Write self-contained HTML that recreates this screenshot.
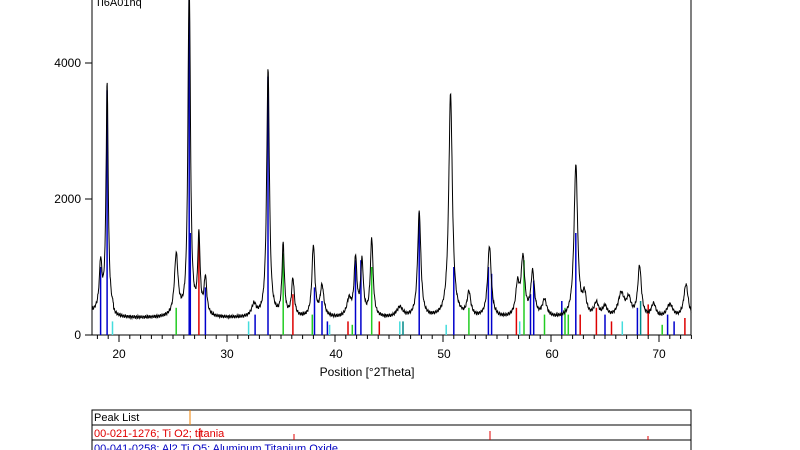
<!DOCTYPE html>
<html><head><meta charset="utf-8"><style>
html,body{margin:0;padding:0;background:#fff;width:800px;height:450px;overflow:hidden}
svg{display:block;font-family:"Liberation Sans",Arial,sans-serif}
</style></head><body>
<svg id="s" width="800" height="450" viewBox="0 0 800 450" xmlns="http://www.w3.org/2000/svg">
<rect x="92" y="-2" width="599" height="337" fill="none" stroke="#000" stroke-width="1"/>
<text x="95" y="6" font-size="11" fill="#000">Ti6A01hq</text>
<g font-size="12" fill="#000" text-anchor="end">
<text x="81" y="67">4000</text><text x="81" y="203">2000</text><text x="81" y="339">0</text>
</g>
<g stroke="#000"><line x1="85" y1="63" x2="92" y2="63"/><line x1="85" y1="199" x2="92" y2="199"/><line x1="85" y1="335" x2="92" y2="335"/></g>
<g font-size="12" fill="#000" text-anchor="middle">
<text x="119" y="358">20</text><text x="227" y="358">30</text><text x="336" y="358">40</text><text x="444" y="358">50</text><text x="552" y="358">60</text><text x="659" y="358">70</text>
<text x="367" y="376">Position [°2Theta]</text>
</g>
<g id="ticks" stroke="#000"></g>
<g id="sticks"></g>
<path id="prof" fill="none" stroke="#000" stroke-width="1"/>
<rect x="92" y="410" width="599" height="45" fill="none" stroke="#000"/>
<line x1="92" y1="425" x2="691" y2="425" stroke="#000"/>
<line x1="92" y1="440" x2="691" y2="440" stroke="#000"/>
<text x="94" y="421" font-size="11">Peak List</text>
<text x="94" y="437" font-size="11" fill="#e00000">00-021-1276; Ti O2; titania</text>
<text x="94" y="452" font-size="11" fill="#0000c0">00-041-0258; Al2 Ti O5; Aluminum Titanium Oxide</text>
<line x1="190" y1="410" x2="190" y2="425" stroke="#f08000"/>
<line x1="200" y1="428" x2="200" y2="440" stroke="#e00000"/>
<line x1="490" y1="431" x2="490" y2="440" stroke="#e00000"/>
<line x1="294" y1="434" x2="294" y2="440" stroke="#e00000"/>
<line x1="648" y1="436" x2="648" y2="440" stroke="#e00000"/>
</svg>
<script>
function X(t){return 119+(t-20)*10.8}
function Y(c){return 335-c*0.068}
var pk=[[18.3,700,.15],[18.9,3350,.12],[25.3,900,.2],[26.5,5200,.13],[27.4,1150,.13],[28.0,550,.15],[32.5,180,.25],[33.8,3650,.15],[35.2,1050,.13],[36.1,550,.15],[38.0,1050,.16],[38.8,450,.2],[41.3,250,.25],[41.9,850,.15],[42.5,800,.15],[43.4,1150,.15],[46.0,150,.35],[47.8,1550,.18],[50.7,3300,.2],[52.4,350,.2],[54.3,1050,.2],[56.9,450,.2],[57.4,850,.2],[58.3,650,.2],[59.4,250,.25],[62.3,2250,.2],[63.1,300,.2],[64.2,200,.25],[65,150,.25],[66.5,350,.35],[67.2,250,.25],[68.2,750,.2],[69.5,200,.25],[71,200,.35],[72.5,500,.25]];
var d="";for(var t=17.5;t<=73;t+=0.03){var c=250-20*(t-17.5)/55+(Math.sin(t*37)*18+Math.sin(t*91)*10);if(t<19.5)c+=80;for(var i=0;i<pk.length;i++){var p=pk[i],u=(t-p[0])/p[2];c+=p[1]/(1+u*u);}var y=Math.max(-2,Y(c));d+=(d?"L":"M")+X(t).toFixed(1)+" "+y.toFixed(1);}
document.getElementById("prof").setAttribute("d",d);
var st=[[18.3,1000,"#00c"],[18.9,3600,"#00c"],[19.4,200,"#4dd"],[25.3,400,"#2c2"],[26.5,5200,"#00c"],[26.6,1500,"#00c"],[27.4,1400,"#d00"],[28.0,700,"#00c"],[32.0,200,"#4dd"],[32.6,300,"#00c"],[33.8,3800,"#00c"],[35.2,1200,"#2c2"],[36.1,600,"#d00"],[37.9,300,"#2c2"],[38.1,700,"#00c"],[38.8,500,"#00c"],[39.3,200,"#00c"],[39.5,150,"#4dd"],[41.2,200,"#d00"],[41.6,150,"#2c2"],[41.9,1100,"#00c"],[42.4,1100,"#00c"],[43.4,1000,"#2c2"],[44.1,200,"#d00"],[46.0,200,"#4dd"],[46.3,200,"#088"],[47.8,1800,"#00c"],[50.3,150,"#4dd"],[51.0,1000,"#00c"],[52.4,400,"#2c2"],[54.2,1000,"#00c"],[54.5,900,"#00c"],[56.8,400,"#d00"],[57.1,200,"#4dd"],[57.5,1100,"#2c2"],[58.1,600,"#00c"],[58.4,800,"#00c"],[59.4,300,"#2c2"],[61.0,500,"#00c"],[61.3,400,"#2c2"],[61.6,300,"#2c2"],[62.3,1500,"#00c"],[62.7,300,"#d00"],[64.2,400,"#d00"],[65,300,"#00c"],[65.6,200,"#d00"],[66.6,200,"#4dd"],[68.0,400,"#00c"],[68.3,500,"#088"],[69.0,450,"#d00"],[70.3,150,"#2c2"],[70.8,300,"#00c"],[71.4,200,"#00c"],[72.4,250,"#d00"]];
var g=document.getElementById("sticks"),h="";st.forEach(function(s){var x=X(s[0]).toFixed(1);h+='<line x1="'+x+'" x2="'+x+'" y1="335" y2="'+Math.max(-2,Y(s[1])).toFixed(1)+'" stroke="'+s[2]+'" stroke-width="1.5"/>';});g.innerHTML=h;
var tk="";for(var t=18;t<=73;t++){var x=X(t).toFixed(1);tk+='<line x1="'+x+'" x2="'+x+'" y1="335" y2="'+(t%10==0?342:339)+'"/>';}document.getElementById("ticks").innerHTML=tk;
</script>
</body></html>
